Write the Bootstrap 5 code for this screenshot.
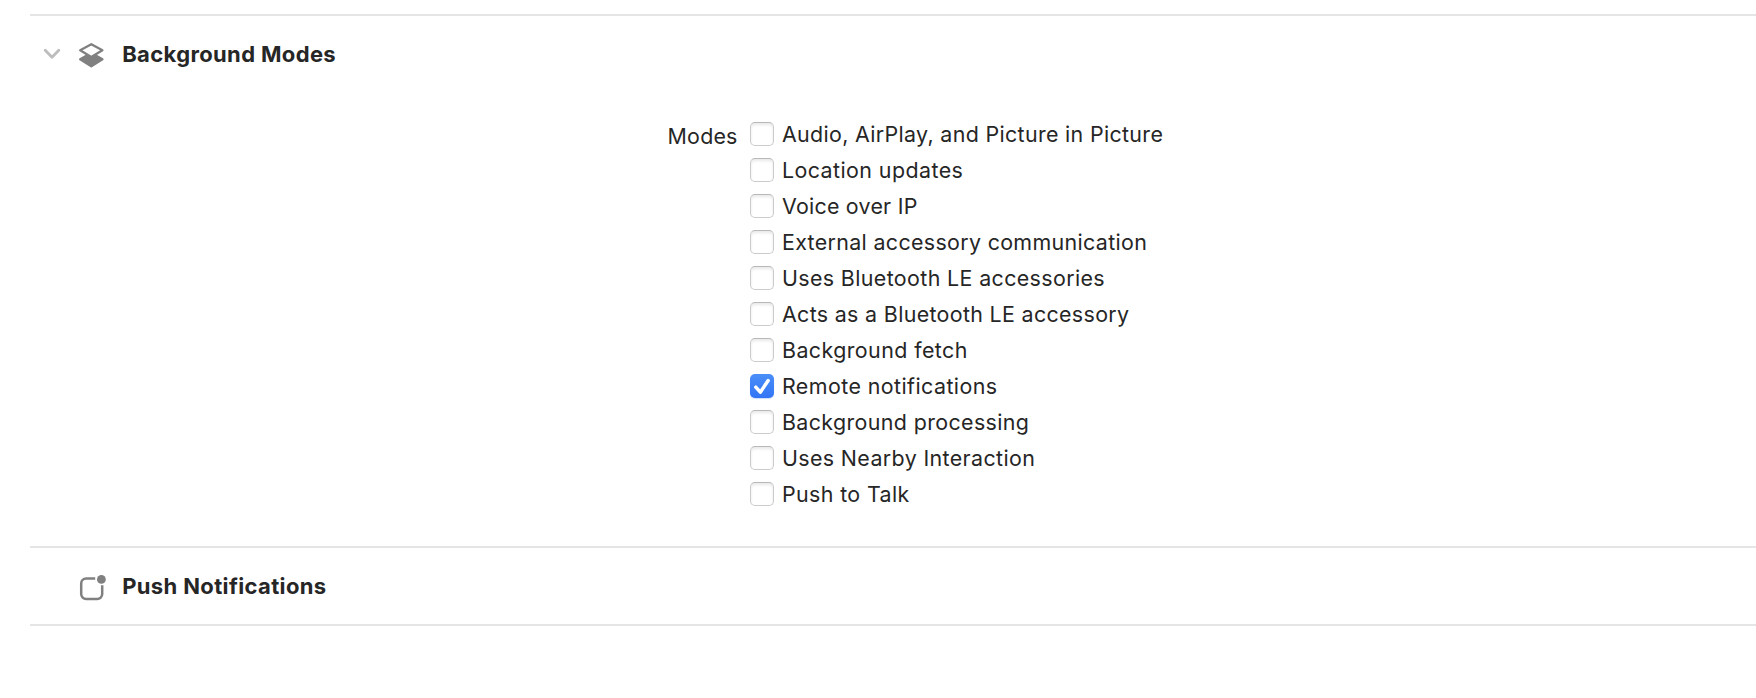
<!DOCTYPE html>
<html lang="en">
<head>
<meta charset="utf-8">
<meta name="viewport" content="width=device-width, initial-scale=1">
<title>Capabilities</title>
<link href="https://cdn.jsdelivr.net/npm/bootstrap@5.3.0/dist/css/bootstrap.min.css" rel="stylesheet">
<style>
body{font-family:Inter,"Liberation Sans",sans-serif;font-size:21.4px;letter-spacing:.38px;color:#262626;background:#fff;overflow:hidden}
.capabilities{margin-left:30px;padding-top:14px}
.capability{border-top:2px solid #e5e5e5}
.capability:last-child{border-bottom:2px solid #e5e5e5}
.capability-head{height:76px}
.chevron-slot{width:44px;padding-left:12px}
.icon-slot{width:48.2px}
.capability-head svg{display:block}
.capability-head h2{font-size:22px;font-weight:700;line-height:30px;letter-spacing:.36px;color:#262626}
.modes-body{padding-top:24px;padding-bottom:34px}
.modes-title{width:707.6px;line-height:36px;padding-top:2px;letter-spacing:.2px}
.mode-list{padding-left:12.4px}
.mode-row{height:36px;line-height:36px;gap:8px}
.mode-row .form-check-input{width:24px;height:24px;border:1px solid #cbcbcb;border-top-color:#b8b8b8;border-radius:5px;box-shadow:inset 0 2px 3px rgba(0,0,0,.09)}
.mode-row .form-check-input:checked{border:0;background-color:#3b7ff6;background-image:url("data:image/svg+xml,%3Csvg xmlns='http://www.w3.org/2000/svg' viewBox='0 0 24 24'%3E%3Cpath d='M5.8 13.2l4.5 5L18.2 6.6' fill='none' stroke='%23fff' stroke-width='3.5' stroke-linecap='round' stroke-linejoin='round'/%3E%3C/svg%3E"),linear-gradient(#4a8ff8,#3274f5);background-size:100% 100%;box-shadow:0 1px 1px rgba(50,116,245,.25)}
.mode-row:nth-child(3){letter-spacing:.25px}
.mode-row:nth-child(1),.mode-row:nth-child(4),.mode-row:nth-child(6){letter-spacing:.34px}
.mode-row:nth-child(2),.mode-row:nth-child(7),.mode-row:nth-child(8){letter-spacing:.43px}
</style>
</head>
<body>
<main class="capabilities">
  <section class="capability">
    <div class="capability-head d-flex align-items-center">
      <span class="chevron-slot">
        <svg width="20" height="16" viewBox="0 0 20 16" fill="none" stroke="#bdbdbd" stroke-width="2.8" stroke-linecap="round" stroke-linejoin="round"><path d="M3.2 4.2L10 11.3l6.8-7.1"/></svg>
      </span>
      <span class="icon-slot">
        <svg width="34" height="36" viewBox="0 0 34 36"><path d="M6.2 23.3L17.3 17l11.1 6.3L17.3 30.3z" fill="#808080" stroke="#808080" stroke-width="2.4" stroke-linejoin="round"/><path d="M6.2 14.3L17.3 8.2l11.1 6.1-11.1 6.8z" fill="#fff" stroke="#808080" stroke-width="2.3" stroke-linejoin="round"/></svg>
      </span>
      <h2 class="m-0">Background Modes</h2>
    </div>
    <div class="modes-body d-flex">
      <div class="modes-title text-end">Modes</div>
      <div class="mode-list">
        <label class="mode-row d-flex align-items-center"><input class="form-check-input m-0" type="checkbox"><span>Audio, AirPlay, and Picture in Picture</span></label>
        <label class="mode-row d-flex align-items-center"><input class="form-check-input m-0" type="checkbox"><span>Location updates</span></label>
        <label class="mode-row d-flex align-items-center"><input class="form-check-input m-0" type="checkbox"><span>Voice over IP</span></label>
        <label class="mode-row d-flex align-items-center"><input class="form-check-input m-0" type="checkbox"><span>External accessory communication</span></label>
        <label class="mode-row d-flex align-items-center"><input class="form-check-input m-0" type="checkbox"><span>Uses Bluetooth LE accessories</span></label>
        <label class="mode-row d-flex align-items-center"><input class="form-check-input m-0" type="checkbox"><span>Acts as a Bluetooth LE accessory</span></label>
        <label class="mode-row d-flex align-items-center"><input class="form-check-input m-0" type="checkbox"><span>Background fetch</span></label>
        <label class="mode-row d-flex align-items-center"><input class="form-check-input m-0" type="checkbox" checked><span>Remote notifications</span></label>
        <label class="mode-row d-flex align-items-center"><input class="form-check-input m-0" type="checkbox"><span>Background processing</span></label>
        <label class="mode-row d-flex align-items-center"><input class="form-check-input m-0" type="checkbox"><span>Uses Nearby Interaction</span></label>
        <label class="mode-row d-flex align-items-center"><input class="form-check-input m-0" type="checkbox"><span>Push to Talk</span></label>
      </div>
    </div>
  </section>
  <section class="capability">
    <div class="capability-head d-flex align-items-center">
      <span class="chevron-slot"></span>
      <span class="icon-slot">
        <svg width="34" height="36" viewBox="0 0 34 36"><path d="M21.2 10.4H12.2a5 5 0 0 0-5 5V26a5 5 0 0 0 5 5h11a5 5 0 0 0 5-5v-8.7" fill="none" stroke="#808080" stroke-width="2.5"/><circle cx="27.4" cy="11.4" r="4.4" fill="#808080"/></svg>
      </span>
      <h2 class="m-0">Push Notifications</h2>
    </div>
  </section>
</main>
<script src="https://cdn.jsdelivr.net/npm/bootstrap@5.3.0/dist/js/bootstrap.bundle.min.js"></script>
</body>
</html>
